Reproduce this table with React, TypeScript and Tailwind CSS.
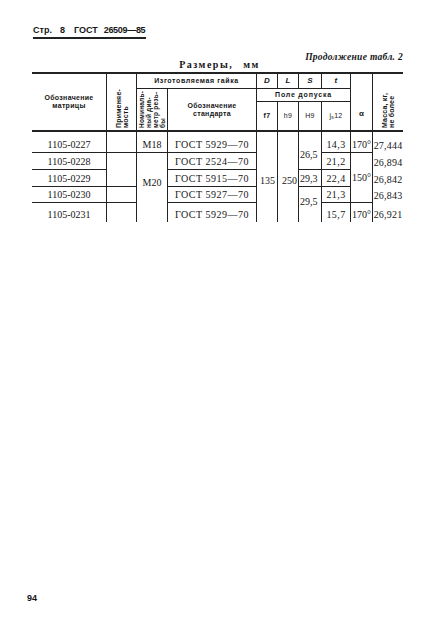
import clsx from 'clsx';

const ids = ['1105-0227', '1105-0228', '1105-0229', '1105-0230', '1105-0231'];
const stds = ['5929', '2524', '5915', '5927', '5929'];
const ts = ['14,3', '21,2', '22,4', '21,3', '15,7'];
const ms = ['27,444', '26,894', '26,842', '26,843', '26,921'];
const rowStart = ['row-start-1', 'row-start-2', 'row-start-3', 'row-start-4', 'row-start-5'];

// no align/justify here, so each cell picks its own
const cell = 'flex leading-[12px] text-[10px] border-[#222]';
const low = 'items-end justify-center pb-[1px]';
const head = "flex text-center border-[#222] font-['Liberation_Sans',sans-serif] font-bold text-[7px] leading-[8px] tracking-[0.3px]";
const rotated = "h-full [writing-mode:vertical-rl] rotate-180 whitespace-nowrap pt-[2px] font-['Liberation_Sans',sans-serif] font-bold text-[6.5px] leading-[7px] tracking-[0.2px]";

const App = () => {
    return (
        <div className="w-[439px] h-[628px] bg-white flex flex-col text-[#161616] font-['Liberation_Serif',serif]">
            {/* page header */}
            <div className="mt-[24px] ml-[33px] w-[113px] border-b-2 border-[#222] pb-[1px] flex font-['Liberation_Sans',sans-serif] font-bold text-[9px] leading-[12px]">
                <span>Стр.</span>
                <span className="ml-[8px]">8</span>
                <span className="ml-[9px]">ГОСТ</span>
                <span className="ml-[6px] tracking-[-0.3px]">26509—85</span>
            </div>
            <div className="mt-[12px] pr-[36px] text-right italic font-bold text-[9.5px] leading-[12px] tracking-[0.3px]">
                Продолжение табл. 2
            </div>
            <div className="-mt-[4px] text-center font-bold text-[10px] leading-[12px] tracking-[1.5px]">
                Размеры,<span className="ml-[10px]">мм</span>
            </div>

            {/* table */}
            <div className="mt-px ml-[32px] w-[371px]">
                <div className="grid grid-cols-[75px_30px_31px_89px_21px_21px_23px_29px_22px_30px] grid-rows-[15px_13px_28px] border-t-2 border-[#222]">
                    <div className={clsx(head, 'items-center justify-center col-start-1 row-start-1 row-span-3 border-r')}>
                        Обозначение<br />матрицы
                    </div>
                    <div className="col-start-2 row-start-1 row-span-3 border-r border-[#222] flex justify-center">
                        <div className={clsx(rotated, 'text-[7px]')}>
                            Применяе-<br />мость
                        </div>
                    </div>
                    <div className={clsx(head, 'items-center justify-center col-start-3 col-span-2 row-start-1 border-r border-b text-[7.5px] tracking-[0.6px]')}>
                        Изготовляемая гайка
                    </div>
                    <div className="col-start-3 row-start-2 row-span-2 border-r border-[#222] flex justify-center">
                        <div className={rotated}>
                            Номиналь-<br />ный диа-<br />метр резь-<br />бы
                        </div>
                    </div>
                    <div className={clsx(head, 'items-center justify-center col-start-4 row-start-2 row-span-2 border-r')}>
                        Обозначение<br />стандарта
                    </div>
                    <div className={clsx(head, 'items-center justify-center col-start-5 row-start-1 border-r border-b italic text-[8px]')}>D</div>
                    <div className={clsx(head, 'items-center justify-center col-start-6 row-start-1 border-r border-b italic text-[8px]')}>L</div>
                    <div className={clsx(head, 'items-center justify-center col-start-7 row-start-1 border-r border-b italic text-[8px]')}>S</div>
                    <div className={clsx(head, 'items-center justify-center col-start-8 row-start-1 border-r border-b italic text-[8px]')}>t</div>
                    <div className={clsx(head, 'items-center justify-center col-start-5 col-span-4 row-start-2 border-r border-b tracking-[0.8px]')}>
                        Поле допуска
                    </div>
                    <div className={clsx(head, 'items-center justify-center col-start-5 row-start-3 border-r')}>f7</div>
                    <div className={clsx(head, 'items-center justify-center col-start-6 row-start-3 border-r font-normal')}>h9</div>
                    <div className={clsx(head, 'items-center justify-center col-start-7 row-start-3 border-r font-normal')}>H9</div>
                    <div className={clsx(head, 'items-center justify-center col-start-8 row-start-3 border-r font-normal')}>
                        j<sub className="text-[5px]">s</sub>12
                    </div>
                    <div className={clsx(head, 'items-end justify-center col-start-9 row-start-1 row-span-3 border-r pb-[12px] text-[8px]')}>
                        α
                    </div>
                    <div className="col-start-10 row-start-1 row-span-3 flex justify-center">
                        <div className={clsx(rotated, 'text-[7px]')}>
                            Масса, кг,<br />не более
                        </div>
                    </div>
                </div>
                <div className="h-[2px] bg-[#222]" />

                <div className="grid grid-cols-[75px_30px_31px_89px_21px_21px_23px_29px_22px_30px] grid-rows-[21px_17px_17px_16px_19px]">
                    {ids.map((id, i) => (
                        <div key={id} className={clsx(cell, low, 'col-start-1 border-r', rowStart[i], i < 4 && 'border-b')}>
                            {id}
                        </div>
                    ))}
                    {ids.map((id, i) => (
                        <div key={'a' + id} className={clsx(cell, 'col-start-2 border-r', rowStart[i], [0, 2, 3].includes(i) && 'border-b')} />
                    ))}
                    <div className={clsx(cell, low, 'col-start-3 row-start-1 border-r border-b')}>M18</div>
                    <div className={clsx(cell, 'items-center justify-center col-start-3 row-start-2 row-span-4 border-r pb-[10px]')}>M20</div>
                    {stds.map((s, i) => (
                        <div key={'s' + i} className={clsx(cell, low, 'col-start-4 border-r tracking-[0.5px]', rowStart[i], i < 4 && 'border-b')}>
                            ГОСТ {s}—70
                        </div>
                    ))}
                    <div className={clsx(cell, 'items-center justify-end col-start-5 row-start-1 row-span-5 border-r pr-[2px] pt-[8px]')}>135</div>
                    <div className={clsx(cell, 'items-center justify-end col-start-6 row-start-1 row-span-5 border-r pr-[1px] pt-[8px]')}>250</div>
                    <div className={clsx(cell, 'items-center justify-start col-start-7 row-start-1 row-span-2 border-r border-b pl-px pt-[8px]')}>26,5</div>
                    <div className={clsx(cell, 'items-end justify-start col-start-7 row-start-3 border-r border-b pl-px pb-[1px]')}>29,3</div>
                    <div className={clsx(cell, 'items-center justify-start col-start-7 row-start-4 row-span-2 border-r pl-px pb-[6px]')}>29,5</div>
                    {ts.map((t, i) => (
                        <div key={'t' + i} className={clsx(cell, low, 'col-start-8 border-r tracking-[0.4px]', rowStart[i], i < 4 && 'border-b')}>
                            {t}
                        </div>
                    ))}
                    <div className={clsx(cell, low, 'col-start-9 row-start-1 border-r border-b')}>170°</div>
                    <div className={clsx(cell, 'items-center justify-center col-start-9 row-start-2 row-span-3 border-r border-b')}>150°</div>
                    <div className={clsx(cell, low, 'col-start-9 row-start-5 border-r')}>170°</div>
                    {ms.map((m, i) => (
                        <div key={'m' + i} className={clsx(cell, low, 'col-start-10 whitespace-nowrap tracking-[0.2px]', rowStart[i])}>
                            {m}
                        </div>
                    ))}
                </div>
            </div>

            <div className="mt-auto mb-[24px] ml-[27px] font-['Liberation_Sans',sans-serif] font-bold text-[9px] leading-[11px]">
                94
            </div>
        </div>
    );
};

export default App;
